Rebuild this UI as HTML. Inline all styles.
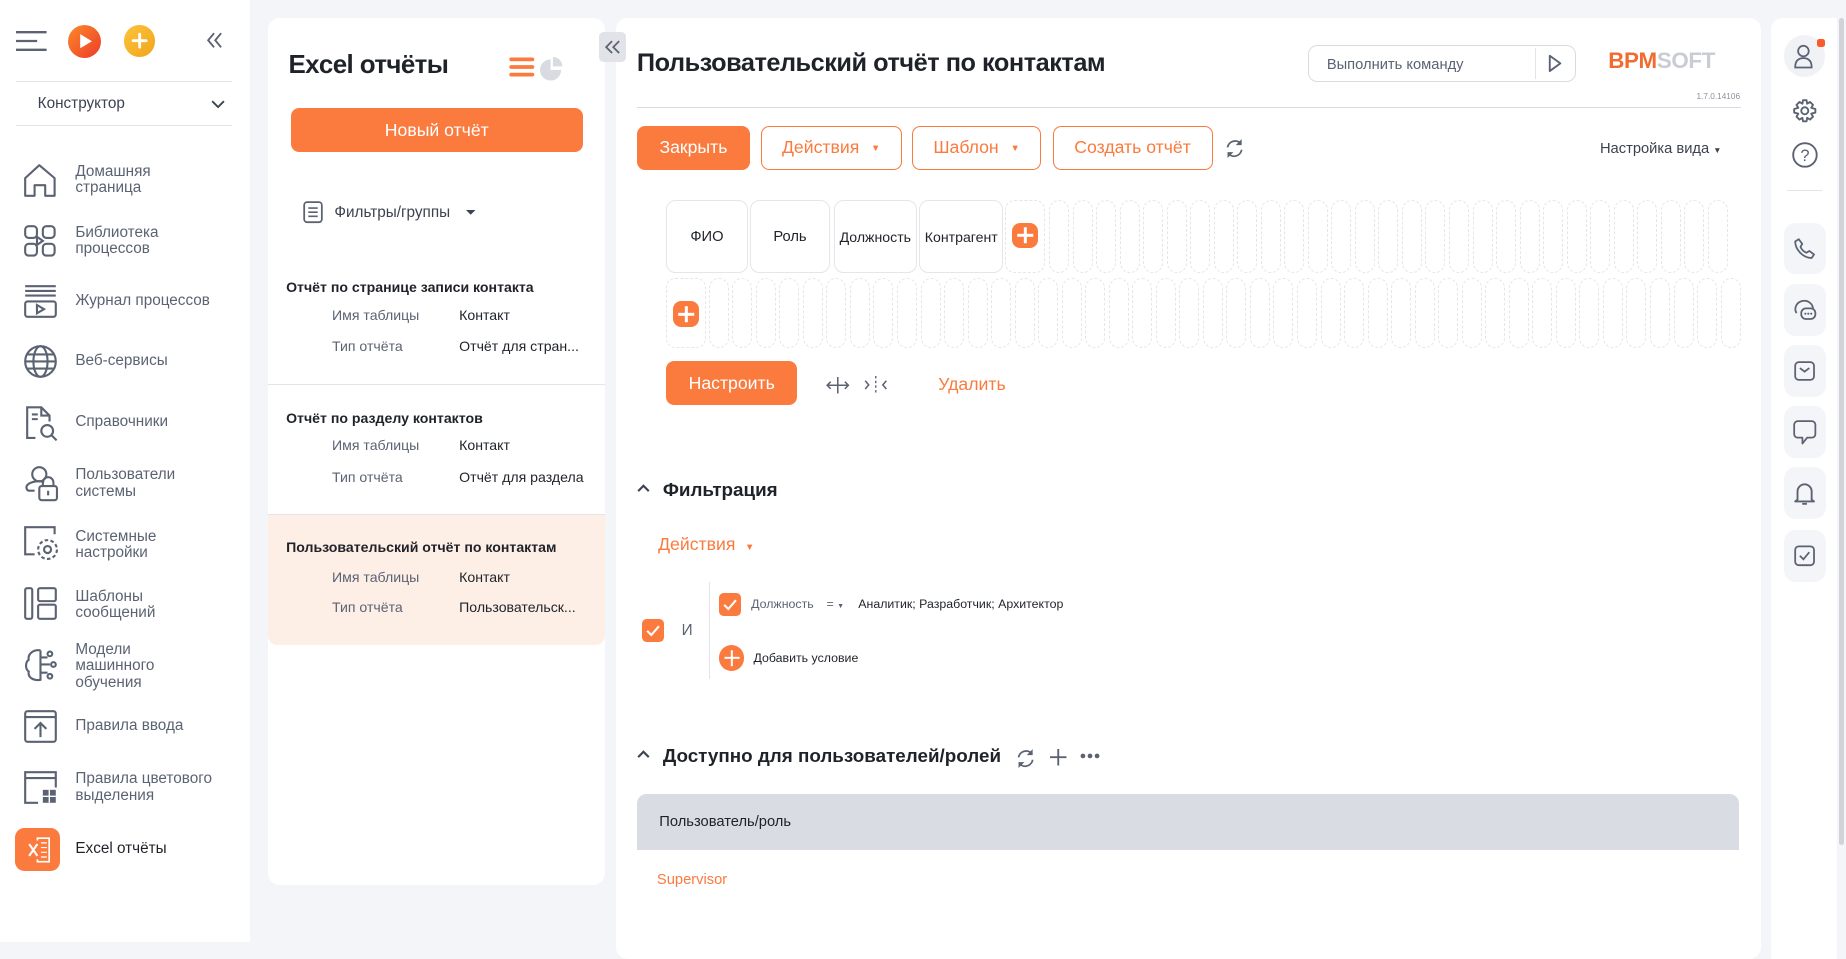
<!DOCTYPE html>
<html><head><meta charset="utf-8"><style>
html{zoom:1.1773}
body{margin:0;width:1568px;height:800px;background:#f4f5f9;font-family:"Liberation Sans","DejaVu Sans",sans-serif;position:relative;overflow:hidden;color:#1f2329}
.a{position:absolute}
.side{left:0;top:0;width:212px;height:800px;background:#fff}
.nav{position:absolute;left:64px;font-size:13px;color:#5b6373;line-height:14px}
.panel{background:#fff;border-radius:10px}
.btn{position:absolute;height:37px;border-radius:7px;font-size:15px;display:flex;align-items:center;justify-content:center}
.fill{background:#fb7a3e;color:#fff}
.out{border:1px solid #fb7a3e;color:#fb7a3e;box-sizing:border-box;background:#fff}
.lt{font-size:12px;font-weight:bold;color:#1f2329}
.lr{font-size:12px;color:#5b6373}
.lv{font-size:12px;color:#1f2329}
.cell{position:absolute;border:1px solid #e4e6ea;border-radius:8px;box-sizing:border-box;font-size:12.5px;display:flex;align-items:center;justify-content:center;color:#1f2329}
.row{position:absolute;display:flex;gap:3px}
.row div{width:17px;border:1px dashed #e4e6ea;border-radius:9px;box-sizing:border-box}
.plus{position:absolute;background:#fb7a3e;border-radius:6px}
.plus:before,.plus:after{content:"";position:absolute;background:#fff;left:50%;top:50%;transform:translate(-50%,-50%)}
.plus:before{width:60%;height:2px}.plus:after{width:2px;height:60%}
.chk{position:absolute;background:#fb7a3e;border-radius:4px}
.rb{position:absolute;left:1515px;width:36px;height:44px;background:#f4f5f9;border-radius:10px}
svg{position:absolute;overflow:visible}
</style></head><body>
<div class="a side"></div>
<svg style="left:14px;top:26px" width="27" height="17"><path d="M0 1H26M0 8.5H18M0 16H26" stroke="#5b6373" stroke-width="2"/></svg>
<div class="a" style="left:58px;top:21px;width:28px;height:28px;border-radius:50%;background:linear-gradient(135deg,#fb8a2a,#ee3a2a)"></div>
<svg style="left:67px;top:28px" width="12" height="14"><path d="M1 1L11 7L1 13Z" fill="#fff"/></svg>
<div class="a" style="left:105px;top:21px;width:27px;height:27px;border-radius:50%;background:linear-gradient(135deg,#fcc33a,#f1a51c)"></div>
<svg style="left:112px;top:28px" width="13" height="13"><path d="M6.5 1V12M1 6.5H12" stroke="#fff" stroke-width="2.4" stroke-linecap="round"/></svg>
<svg style="left:176px;top:27px" width="14" height="14"><path d="M6 1L1 7L6 13M12 1L7 7L12 13" fill="none" stroke="#5b6373" stroke-width="1.6"/></svg>
<div class="a" style="left:14px;top:69px;width:183px;height:1px;background:#e2e4e9"></div>
<div class="a" style="left:32px;top:81px;font-size:13px;color:#3c4350">Конструктор</div>
<svg style="left:179px;top:85px" width="12" height="7"><path d="M1 1L6 6L11 1" fill="none" stroke="#3c4350" stroke-width="1.6"/></svg>
<div class="a" style="left:14px;top:106px;width:183px;height:1px;background:#e2e4e9"></div>

<svg style="left:20px;top:139px" width="28" height="28"><path d="M1 27V12L13 1L26 12V27H18V18H9V27Z" fill="none" stroke="#5b6373" stroke-width="1.8" stroke-linejoin="round"/></svg>
<div class="nav" style="top:139px">Домашняя<br>страница</div>
<svg style="left:20px;top:191px" width="28" height="28"><g fill="none" stroke="#5b6373" stroke-width="1.8"><rect x="1" y="1" width="10" height="10" rx="3"/><rect x="16" y="1" width="10" height="10" rx="3"/><rect x="1" y="16" width="10" height="10" rx="3"/><rect x="16" y="16" width="10" height="10" rx="3"/><path d="M11 10L16 13.5L11 17Z"/></g></svg>
<div class="nav" style="top:191px">Библиотека<br>процессов</div>
<svg style="left:20px;top:242px" width="28" height="30"><g fill="none" stroke="#5b6373" stroke-width="1.8"><path d="M1 1H27M1 5H27M1 9H27"/><rect x="1" y="14" width="26" height="13" rx="2"/><path d="M11 17L17 20.5L11 24Z"/></g></svg>
<div class="nav" style="top:249px">Журнал процессов</div>
<svg style="left:20px;top:293px" width="28" height="28"><g fill="none" stroke="#5b6373" stroke-width="1.8"><circle cx="14" cy="14" r="13"/><ellipse cx="14" cy="14" rx="6" ry="13"/><path d="M1 14H27M3 8H25M3 20H25"/></g></svg>
<div class="nav" style="top:300px">Веб-сервисы</div>
<svg style="left:22px;top:344px" width="28" height="30"><g fill="none" stroke="#5b6373" stroke-width="1.8"><path d="M8 28H1V2H13L20 9V14M13 2V9H20"/><path d="M5 8H10M5 12H10"/><circle cx="18" cy="22" r="5"/><path d="M21.5 25.5L26 30"/></g></svg>
<div class="nav" style="top:352px">Справочники</div>
<svg style="left:20px;top:396px" width="30" height="30"><g fill="none" stroke="#5b6373" stroke-width="1.8"><circle cx="13" cy="7" r="6"/><path d="M9 21H4A3 3 0 0 1 3 16C6 13 14 12 17 14"/><rect x="13" y="17" width="15" height="12" rx="2"/><path d="M16 17V14A4.5 4.5 0 0 1 25 14V17M20.5 21V25"/></g></svg>
<div class="nav" style="top:397px">Пользователи<br>системы</div>
<svg style="left:20px;top:447px" width="30" height="30"><g fill="none" stroke="#5b6373" stroke-width="1.8"><path d="M9 24H1V1H26V7"/><circle cx="20" cy="20" r="3"/><circle cx="20" cy="20" r="8" stroke-dasharray="3 2"/></g></svg>
<div class="nav" style="top:449px">Системные<br>настройки</div>
<svg style="left:20px;top:499px" width="28" height="28"><g fill="none" stroke="#5b6373" stroke-width="1.8"><rect x="1" y="1" width="6" height="26" rx="1.5"/><rect x="12" y="1" width="15" height="11" rx="1.5"/><rect x="12" y="15" width="15" height="12" rx="1.5"/></g></svg>
<div class="nav" style="top:500px">Шаблоны<br>сообщений</div>
<svg style="left:20px;top:550px" width="30" height="30"><g fill="none" stroke="#5b6373" stroke-width="1.8"><path d="M14 2C8 1 3 5 4 10C1 12 1 18 4 20C3 25 8 28 14 27V2"/><path d="M14 8H20M14 14H22M14 21H20"/><circle cx="22" cy="5" r="2"/><circle cx="25" cy="14" r="2"/><circle cx="22" cy="24" r="2"/></g></svg>
<div class="nav" style="top:545px">Модели<br>машинного<br>обучения</div>
<svg style="left:20px;top:603px" width="28" height="28"><g fill="none" stroke="#5b6373" stroke-width="1.8"><rect x="1" y="1" width="26" height="26" rx="2"/><path d="M1 6H27M14 23V12M9 16L14 11L19 16"/></g></svg>
<div class="nav" style="top:610px">Правила ввода</div>
<svg style="left:20px;top:655px" width="28" height="28"><g fill="none" stroke="#5b6373" stroke-width="1.8"><path d="M12 27H1V1H27V14"/><path d="M1 6H27"/></g><rect x="16" y="16" width="11" height="11" fill="#5b6373"/><path d="M21.5 16V27M16 21.5H27" stroke="#fff" stroke-width="1.2"/></svg>
<div class="nav" style="top:655px">Правила цветового<br>выделения</div>
<div class="a" style="left:13px;top:703px;width:38px;height:37px;border-radius:8px;background:#fb7a3e"></div>
<svg style="left:24px;top:711px" width="18" height="22"><rect x="8" y="1" width="10" height="20" fill="none" stroke="#fff" stroke-width="1.4"/><path d="M10 5H16M10 9H16M10 13H16M10 17H16" stroke="#fff"/><rect x="0" y="3" width="11" height="16" fill="#fb7a3e"/><path d="M1 6L8 16M8 6L1 16" stroke="#fff" stroke-width="1.8"/></svg>
<div class="nav" style="top:714px;color:#1f2329">Excel отчёты</div>

<div class="a panel" style="left:228px;top:15px;width:286px;height:737px"></div>
<div class="a" style="left:245px;top:43px;font-size:22px;font-weight:bold;letter-spacing:-0.5px">Excel отчёты</div>
<svg style="left:433px;top:48px" width="20" height="17"><path d="M1 2H19M1 8.5H19M1 15H19" stroke="#fb7a3e" stroke-width="3.2" stroke-linecap="round"/></svg>
<svg style="left:459px;top:48px" width="20" height="20"><path d="M9 2A9 9 0 1 0 18 11H9Z" fill="#d8dbe2"/><path d="M11 0A8 8 0 0 1 19 8H11Z" fill="#d8dbe2"/></svg>
<div class="btn fill" style="left:247px;top:92px;width:248px">Новый отчёт</div>
<svg style="left:257px;top:171px" width="17" height="19"><rect x="1" y="1" width="15" height="17" rx="2.5" fill="none" stroke="#5b6373" stroke-width="1.5"/><path d="M4.5 6H12.5M4.5 9.5H12.5M4.5 13H12.5" stroke="#5b6373" stroke-width="1.4"/></svg>
<div class="a" style="left:284px;top:173px;font-size:13px;color:#3c4350">Фильтры/группы</div>
<svg style="left:396px;top:178px" width="8" height="5"><path d="M0 0H8L4 4Z" fill="#3c4350"/></svg>
<div class="a lt" style="left:243px;top:237px">Отчёт по странице записи контакта</div>
<div class="a lr" style="left:282px;top:261px">Имя таблицы</div><div class="a lv" style="left:390px;top:261px">Контакт</div>
<div class="a lr" style="left:282px;top:287px">Тип отчёта</div><div class="a lv" style="left:390px;top:287px">Отчёт для стран...</div>
<div class="a" style="left:228px;top:326px;width:286px;height:1px;background:#e2e4e9"></div>
<div class="a lt" style="left:243px;top:348px">Отчёт по разделу контактов</div>
<div class="a lr" style="left:282px;top:371px">Имя таблицы</div><div class="a lv" style="left:390px;top:371px">Контакт</div>
<div class="a lr" style="left:282px;top:398px">Тип отчёта</div><div class="a lv" style="left:390px;top:398px">Отчёт для раздела</div>
<div class="a" style="left:228px;top:437px;width:286px;height:110px;background:#fdeee6;border-radius:0 0 8px 8px;border-top:1px solid #e2e4e9"></div>
<div class="a lt" style="left:243px;top:458px">Пользовательский отчёт по контактам</div>
<div class="a lr" style="left:282px;top:483px">Имя таблицы</div><div class="a lv" style="left:390px;top:483px">Контакт</div>
<div class="a lr" style="left:282px;top:509px">Тип отчёта</div><div class="a lv" style="left:390px;top:509px">Пользовательск...</div>

<div class="a panel" style="left:523px;top:15px;width:973px;height:800px"></div>
<div class="a" style="left:509px;top:27px;width:23px;height:26px;background:#e1e3e8;border-radius:4px"></div>
<svg style="left:514px;top:34px" width="13" height="12"><path d="M6 1L1 6L6 11M12 1L7 6L12 11" fill="none" stroke="#5b6373" stroke-width="1.5"/></svg>
<div class="a" style="left:541px;top:42px;font-size:21.5px;font-weight:bold;letter-spacing:-0.4px">Пользовательский отчёт по контактам</div>
<div class="a" style="left:1111px;top:38px;width:228px;height:32px;border:1px solid #d8dbe2;border-radius:8px;box-sizing:border-box"></div>
<div class="a" style="left:1127px;top:48px;font-size:12.5px;color:#5b6373">Выполнить команду</div>
<div class="a" style="left:1304px;top:41px;width:1px;height:26px;background:#e2e4e9"></div>
<svg style="left:1315px;top:46px" width="12" height="16"><path d="M1.5 1.5L10.5 8L1.5 14.5Z" fill="none" stroke="#5b6373" stroke-width="1.6" stroke-linejoin="round"/></svg>
<div class="a" style="left:1366px;top:41px;font-size:19px;font-weight:bold;letter-spacing:-0.3px"><span style="color:#f26b2f">BPM</span><span style="color:#c9ccd3">SOFT</span></div>
<div class="a" style="left:1420px;top:78px;width:58px;text-align:right;font-size:7px;color:#8a909c">1.7.0.14106</div>
<div class="a" style="left:541px;top:91px;width:938px;height:1px;background:#d8dbe2"></div>
<div class="btn fill" style="left:541px;top:107px;width:96px">Закрыть</div>
<div class="btn out" style="left:646px;top:107px;width:120px">Действия <span style="font-size:8px;margin-left:10px">▼</span></div>
<div class="btn out" style="left:775px;top:107px;width:109px">Шаблон <span style="font-size:8px;margin-left:10px">▼</span></div>
<div class="btn out" style="left:894px;top:107px;width:136px">Создать отчёт</div>
<svg style="left:1040px;top:117px" width="18" height="18"><g fill="none" stroke="#5b6373" stroke-width="1.5"><path d="M3 8A6.5 6.5 0 0 1 14.5 5M15 10A6.5 6.5 0 0 1 3.5 13"/></g><path d="M15 1V6H10Z M3 17V12H8Z" fill="#5b6373"/></svg>
<div class="a" style="left:1359px;top:120px;font-size:12.5px;color:#3c4350">Настройка вида <span style="font-size:7px">▼</span></div>

<div class="cell" style="left:566px;top:170px;width:69px;height:62px">ФИО</div>
<div class="cell" style="left:637px;top:170px;width:68px;height:62px">Роль</div>
<div class="cell" style="left:708px;top:170px;width:71px;height:62px;font-size:12px">Должность</div>
<div class="cell" style="left:781px;top:170px;width:71px;height:62px;font-size:12px">Контрагент</div>
<div class="cell" style="left:854px;top:170px;width:34px;height:62px;border-style:dashed"></div>
<div class="plus" style="left:860px;top:189px;width:22px;height:22px;border-radius:7px"></div>
<div class="row" style="left:891px;top:170px;height:62px">
<div></div><div></div><div></div><div></div><div></div><div></div><div></div><div></div><div></div><div></div><div></div><div></div><div></div><div></div><div></div><div></div><div></div><div></div><div></div><div></div><div></div><div></div><div></div><div></div><div></div><div></div><div></div><div></div><div></div>
</div>
<div class="cell" style="left:566px;top:236px;width:34px;height:60px;border-style:dashed"></div>
<div class="plus" style="left:572px;top:256px;width:22px;height:22px;border-radius:7px"></div>
<div class="row" style="left:602px;top:236px;height:60px">
<div></div><div></div><div></div><div></div><div></div><div></div><div></div><div></div><div></div><div></div><div></div><div></div><div></div><div></div><div></div><div></div><div></div><div></div><div></div><div></div><div></div><div></div><div></div><div></div><div></div><div></div><div></div><div></div><div></div><div></div><div></div><div></div><div></div><div></div><div></div><div></div><div></div><div></div><div></div><div></div><div></div><div></div><div></div><div></div>
</div>
<div class="btn fill" style="left:566px;top:307px;width:111px">Настроить</div>
<svg style="left:702px;top:320px" width="20" height="14"><path d="M1 7H19M4 4L1 7L4 10M16 4L19 7L16 10M10 0V14" fill="none" stroke="#5b6373" stroke-width="1.3"/></svg>
<svg style="left:734px;top:319px" width="20" height="15"><path d="M1 4L4 7.5L1 11M19 4L16 7.5L19 11" fill="none" stroke="#5b6373" stroke-width="1.3"/><path d="M10 0V15" stroke="#5b6373" stroke-width="1.2" stroke-dasharray="2 2"/></svg>
<div class="a" style="left:797px;top:318px;font-size:15px;color:#fb7a3e">Удалить</div>

<svg style="left:541px;top:411px" width="11" height="7"><path d="M1 6L5.5 1.5L10 6" fill="none" stroke="#3c4350" stroke-width="1.8"/></svg>
<div class="a" style="left:563px;top:407px;font-size:16px;font-weight:bold">Фильтрация</div>
<div class="a" style="left:559px;top:454px;font-size:15px;color:#fb7a3e">Действия <span style="font-size:8px;margin-left:4px">▼</span></div>
<div class="a" style="left:602px;top:494px;width:1px;height:83px;background:#e2e4e9"></div>
<div class="chk" style="left:545px;top:526px;width:19px;height:19px"></div>
<svg style="left:549px;top:531px" width="12" height="10"><path d="M1 5L4.5 8.5L11 1" fill="none" stroke="#fff" stroke-width="1.8"/></svg>
<div class="a" style="left:579px;top:528px;font-size:13px;color:#5b6373">И</div>
<div class="chk" style="left:611px;top:504px;width:18px;height:19px"></div>
<svg style="left:614px;top:509px" width="12" height="10"><path d="M1 5L4.5 8.5L11 1" fill="none" stroke="#fff" stroke-width="1.8"/></svg>
<div class="a" style="left:638px;top:507px;font-size:10.5px;color:#5b6373">Должность</div>
<div class="a" style="left:702px;top:507px;font-size:10.5px;color:#5b6373">= <span style="font-size:6px">▼</span></div>
<div class="a" style="left:729px;top:507px;font-size:10.5px">Аналитик; Разработчик; Архитектор</div>
<div class="plus" style="left:611px;top:548px;width:21px;height:22px;border-radius:11px"></div>
<div class="a" style="left:640px;top:553px;font-size:10.5px">Добавить условие</div>

<svg style="left:541px;top:637px" width="11" height="7"><path d="M1 6L5.5 1.5L10 6" fill="none" stroke="#3c4350" stroke-width="1.8"/></svg>
<div class="a" style="left:563px;top:633px;font-size:16px;font-weight:bold">Доступно для пользователей/ролей</div>
<svg style="left:862px;top:635px" width="18" height="18"><g fill="none" stroke="#5b6373" stroke-width="1.5"><path d="M3 8A6.5 6.5 0 0 1 14.5 5M15 10A6.5 6.5 0 0 1 3.5 13"/></g><path d="M15 1V6H10Z M3 17V12H8Z" fill="#5b6373"/></svg>
<svg style="left:892px;top:636px" width="14" height="14"><path d="M7 0V14M0 7H14" stroke="#5b6373" stroke-width="1.6"/></svg>
<svg style="left:917px;top:640px" width="17" height="5"><circle cx="2.5" cy="2.5" r="2" fill="#5b6373"/><circle cx="8.5" cy="2.5" r="2" fill="#5b6373"/><circle cx="14.5" cy="2.5" r="2" fill="#5b6373"/></svg>
<div class="a" style="left:541px;top:674px;width:936px;height:48px;background:#d9dce3;border-radius:8px 8px 0 0"></div>
<div class="a" style="left:560px;top:691px;font-size:12.5px">Пользователь/роль</div>
<div class="a" style="left:558px;top:741px;font-size:12.5px;color:#fb7a3e">Supervisor</div>

<div class="a" style="left:1504px;top:15px;width:56px;height:800px;background:#fff;border-radius:10px 0 0 0"></div>
<div class="a" style="left:1515px;top:30px;width:35px;height:35px;border-radius:50%;background:#f0f2f6"></div>
<svg style="left:1524px;top:37px" width="18" height="22"><g fill="none" stroke="#5b6373" stroke-width="1.5"><circle cx="8" cy="6" r="4.5"/><path d="M1 20C1 14 4 12 8 12C12 12 15 14 15 20Z"/></g></svg>
<div class="a" style="left:1543px;top:33px;width:7px;height:7px;background:#fb5a2a;border-radius:2px"></div>
<svg style="left:1523px;top:84px" width="20" height="20"><g fill="none" stroke="#5b6373" stroke-width="1.6"><circle cx="10" cy="10" r="3"/><path d="M8.5 1H11.5L12 4L14.5 2.5L17 5L15.5 7.5L19 8.5V11.5L15.5 12.5L17 15L14.5 17.5L12 16L11.5 19H8.5L8 16L5.5 17.5L3 15L4.5 12.5L1 11.5V8.5L4.5 7.5L3 5L5.5 2.5L8 4Z" stroke-linejoin="round"/></g></svg>
<svg style="left:1522px;top:121px" width="22" height="22"><circle cx="11" cy="11" r="10" fill="none" stroke="#5b6373" stroke-width="1.6"/><text x="11" y="16" font-size="14" text-anchor="middle" fill="#5b6373" font-family="Liberation Sans">?</text></svg>
<div class="a" style="left:1518px;top:161px;width:30px;height:1px;background:#e2e4e9"></div>
<div class="rb" style="top:189px"></div><div class="rb" style="top:241px"></div><div class="rb" style="top:293px"></div><div class="rb" style="top:345px"></div><div class="rb" style="top:397px"></div><div class="rb" style="top:450px"></div>
<svg style="left:1524px;top:202px" width="18" height="18"><path d="M4 1L7 5L5.5 7.5C6.5 10 8 11.5 10.5 12.5L13 11L17 14L15 17C8 17 1 10 1 3Z" fill="none" stroke="#5b6373" stroke-width="1.5" stroke-linejoin="round"/></svg>
<svg style="left:1523px;top:254px" width="20" height="18"><g fill="none" stroke="#5b6373" stroke-width="1.5"><path d="M3 12A7.5 7 0 1 1 17 9"/><rect x="7" y="8" width="12" height="9" rx="4"/></g><circle cx="10.5" cy="12.5" r="0.9" fill="#5b6373"/><circle cx="13" cy="12.5" r="0.9" fill="#5b6373"/><circle cx="15.5" cy="12.5" r="0.9" fill="#5b6373"/></svg>
<svg style="left:1524px;top:307px" width="18" height="17"><g fill="none" stroke="#5b6373" stroke-width="1.5"><rect x="1" y="1" width="16" height="15" rx="3"/><path d="M5 6L9 9L13 6"/></g></svg>
<svg style="left:1523px;top:357px" width="20" height="21"><path d="M4 1H16A3 3 0 0 1 19 4V12A3 3 0 0 1 16 15H12L8 20V15H4A3 3 0 0 1 1 12V4A3 3 0 0 1 4 1Z" fill="none" stroke="#5b6373" stroke-width="1.5" stroke-linejoin="round"/></svg>
<svg style="left:1524px;top:409px" width="18" height="21"><path d="M3 15V8A6 6 0 0 1 15 8V15L17 16.5H1ZM7 18.5H11" fill="none" stroke="#5b6373" stroke-width="1.6" stroke-linejoin="round"/></svg>
<svg style="left:1524px;top:462px" width="18" height="19"><g fill="none" stroke="#5b6373" stroke-width="1.5"><rect x="1" y="2" width="16" height="16" rx="3"/><path d="M5 10L8 13L13 7"/></g></svg>
<div class="a" style="left:1562px;top:15px;width:4px;height:703px;background:#d0d3da;border-radius:2px"></div>
</body></html>
